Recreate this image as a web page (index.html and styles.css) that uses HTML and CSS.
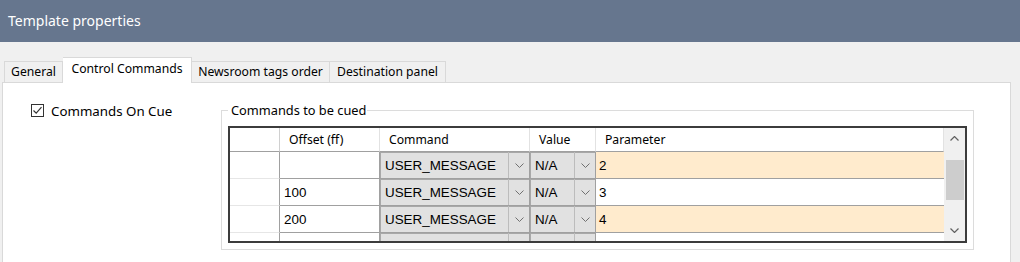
FILE: index.html
```html
<!DOCTYPE html>
<html lang="en"><head>
<meta charset="UTF-8">
<title>Template properties</title>
<link rel="stylesheet" href="styles.css">
</head>
<body>
<div class="titlebar">Template properties</div>

<div class="dialog">
<div class="tabs">
<div class="tab t-general">General</div>
<div class="tab t-control active">Control Commands</div>
<div class="tab t-newsroom">Newsroom tags order</div>
<div class="tab t-dest">Destination panel</div>
</div>

<div class="panel">
<label class="oncue">
<span class="check"><svg width="11" height="11" viewBox="0 0 11 11"><path d="M1.5 5.5 L4.2 8.2 L9.5 2.2" fill="none" stroke="#333" stroke-width="1.2"/></svg></span>
Commands On Cue
</label>

<fieldset class="group">
<legend>Commands to be cued</legend>
<div class="grid">
<div class="rows">
<div class="row head">
<div class="cell"></div>
<div class="cell">Offset (ff)</div>
<div class="cell">Command</div>
<div class="cell">Value</div>
<div class="cell">Parameter</div>
</div>
<div class="row">
<div class="cell rh"></div>
<div class="cell"></div>
<div class="cell combo"><span>USER_MESSAGE</span><i><svg width="9" height="5" viewBox="0 0 9 5"><path d="M0.5 0.5 L4.5 4.5 L8.5 0.5" fill="none" stroke="#707070"/></svg></i></div>
<div class="cell combo"><span>N/A</span><i><svg width="9" height="5" viewBox="0 0 9 5"><path d="M0.5 0.5 L4.5 4.5 L8.5 0.5" fill="none" stroke="#707070"/></svg></i></div>
<div class="cell param alt">2</div>
</div>
<div class="row">
<div class="cell rh"></div>
<div class="cell">100</div>
<div class="cell combo"><span>USER_MESSAGE</span><i><svg width="9" height="5" viewBox="0 0 9 5"><path d="M0.5 0.5 L4.5 4.5 L8.5 0.5" fill="none" stroke="#707070"/></svg></i></div>
<div class="cell combo"><span>N/A</span><i><svg width="9" height="5" viewBox="0 0 9 5"><path d="M0.5 0.5 L4.5 4.5 L8.5 0.5" fill="none" stroke="#707070"/></svg></i></div>
<div class="cell param">3</div>
</div>
<div class="row">
<div class="cell rh"></div>
<div class="cell">200</div>
<div class="cell combo"><span>USER_MESSAGE</span><i><svg width="9" height="5" viewBox="0 0 9 5"><path d="M0.5 0.5 L4.5 4.5 L8.5 0.5" fill="none" stroke="#707070"/></svg></i></div>
<div class="cell combo"><span>N/A</span><i><svg width="9" height="5" viewBox="0 0 9 5"><path d="M0.5 0.5 L4.5 4.5 L8.5 0.5" fill="none" stroke="#707070"/></svg></i></div>
<div class="cell param alt">4</div>
</div>
<div class="row">
<div class="cell rh"></div>
<div class="cell"></div>
<div class="cell combo"><span></span><i></i></div>
<div class="cell combo"><span></span><i></i></div>
<div class="cell param"></div>
</div>
</div>
<div class="scrollbar">
<div class="arrow"><svg width="9" height="5" viewBox="0 0 9 5"><path d="M0.5 4.5 L4.5 0.5 L8.5 4.5" fill="none" stroke="#606060" stroke-width="1.2"/></svg></div>
<div class="track"><div class="thumb"></div></div>
<div class="arrow"><svg width="9" height="5" viewBox="0 0 9 5"><path d="M0.5 0.5 L4.5 4.5 L8.5 0.5" fill="none" stroke="#606060" stroke-width="1.2"/></svg></div>
</div>
</div>
</fieldset>
</div>
</div>
</body></html>
```

FILE: styles.css
```css
body {
    margin: 0;
    background: #f0f0f0;
    font-family: "Noto Sans", "Open Sans", sans-serif;
    font-size: 12px;
    color: #000;
    overflow: hidden;
}

.titlebar {
    height: 42px;
    line-height: 42px;
    padding-left: 8px;
    background: #66768e;
    color: #fff;
    font-size: 14px;
}

.dialog {
    padding: 15px 9px 0 2px;
}

/* tab strip */
.tabs {
    display: flex;
    align-items: flex-end;
    padding-left: 2px;
    height: 25px;
}

.tab {
    box-sizing: border-box;
    height: 21px;
    line-height: 19px;
    text-align: center;
    background: #f0f0f0;
    border: 1px solid #d9d9d9;
    border-bottom: none;
    border-left: none;
    white-space: nowrap;
    font-size: 12.2px;
}

.t-general { width: 59px; border-left: 1px solid #d9d9d9; }
.t-control { width: 129px; }
.t-newsroom { width: 138px; }
.t-dest { width: 116px; }

.tab.active {
    height: 26px;
    line-height: 22px;
    background: #fff;
    margin-bottom: -1px;
    position: relative;
    z-index: 1;
}

/* page of the active tab */
.panel {
    display: flex;
    align-items: flex-start;
    height: 180px;
    box-sizing: border-box;
    padding-top: 19px;
    background: #fff;
    border: 1px solid #d9d9d9;
    border-bottom: none;
}

.oncue {
    display: flex;
    align-items: center;
    box-sizing: border-box;
    width: 218px;
    height: 17px;
    padding-left: 28px;
    gap: 7px;
    font-size: 13.3px;
}

.check {
    box-sizing: border-box;
    width: 13px;
    height: 13px;
    border: 1px solid #333;
    display: flex;
    align-items: center;
    justify-content: center;
}

.group {
    margin: 0;
    width: 753px;
    box-sizing: border-box;
    padding: 8px 6px 6px 6px;
    border: 1px solid #dcdcdc;
    min-width: 0;
}

.group legend {
    padding: 0 1px 0 3px;
    line-height: 16px;
    font-size: 12.8px;
}

/* data grid */
.grid {
    display: flex;
    height: 117px;
    box-sizing: border-box;
    border: 2px solid #3c3c3c;
    overflow: hidden;
}

.rows {
    width: 714px;
}

.row {
    display: grid;
    grid-template-columns: 50px 100px 150px 66px 348px;
    height: 27px;
    font-family: "Liberation Sans", Arial, sans-serif;
    font-size: 13.4px;
}

.row.head {
    height: 24px;
    font-family: "Noto Sans", "Open Sans", sans-serif;
    font-size: 12.2px;
}

.cell {
    box-sizing: border-box;
    border-right: 1px solid #a0a0a0;
    border-bottom: 1px solid #a0a0a0;
    padding-left: 4px;
    display: flex;
    align-items: center;
    background: #fff;
    white-space: nowrap;
    overflow: hidden;
}

.head .cell {
    border-right-color: #e2e2e2;
    padding-left: 9px;
}

.head .cell:first-child {
    border-right-color: #d0d0d0;
}

.rh {
    border-bottom-color: #e6e6e6;
}

.combo {
    padding: 0;
    background: #e1e1e1;
    box-shadow: inset 1px 1px 0 #a8a8a8;
}

.combo span {
    flex: 1;
    padding-left: 5px;
}

.combo i {
    width: 21px;
    height: 100%;
    box-sizing: border-box;
    border-left: 1px solid #bcbcbc;
    display: flex;
    align-items: center;
    justify-content: center;
}

.param {
    padding-left: 3px;
    border-right: none;
}

.param.alt {
    background: #ffebcd;
}

.scrollbar {
    width: 21px;
    display: flex;
    flex-direction: column;
    background: #f0f0f0;
}

.arrow {
    height: 21px;
    display: flex;
    align-items: center;
    justify-content: center;
}

.track {
    flex: 1;
    padding: 11px 1px 0 2px;
}

.thumb {
    height: 40px;
    background: #cdcdcd;
}
```
